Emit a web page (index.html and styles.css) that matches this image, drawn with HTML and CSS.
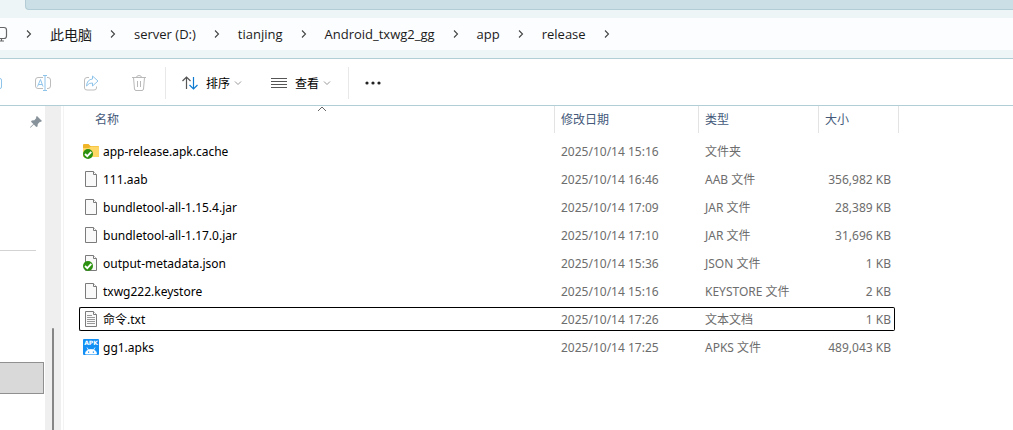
FILE: index.html
```html
<!DOCTYPE html>
<html lang="zh-CN">
<head>
    <meta charset="UTF-8">
    <meta name="viewport" content="width=device-width, initial-scale=1.0">
    <title>release</title>
    <link rel="stylesheet" href="styles.css">
</head>
<body>
    <!-- shared icons -->
    <svg class="sprite" aria-hidden="true">
        <symbol id="chevron" viewBox="0 0 8 8"><path d="M2 0.5 5.5 4 2 7.5" fill="none" stroke="#444" stroke-width="1.1"/></symbol>
        <symbol id="caret" viewBox="0 0 8 8"><path d="M1 2.5 4 5.5 7 2.5" fill="none" stroke="#999" stroke-width="1"/></symbol>
        <symbol id="file" viewBox="0 0 16 16">
            <path d="M2.5 0.5H10.5L13.5 3.5V15.5H2.5Z" fill="#f9f9f9" stroke="#7b7b7b"/>
            <path d="M10.5 0.5V3.5H13.5" fill="#fff" stroke="#7b7b7b"/>
        </symbol>
        <symbol id="synced" viewBox="0 0 16 16">
            <circle cx="5" cy="11" r="5" fill="#2c9110"/>
            <path d="M2 11 4.3 13.2 8.3 8.8" fill="none" stroke="#fff" stroke-width="1.8"/>
        </symbol>
    </svg>

    <div class="window">
        <div class="tab-strip"><div class="tab-space"></div></div>

        <nav class="address-bar" aria-label="路径">
            <svg class="pc-icon" viewBox="0 0 8 16"><path d="M0 1.5H4Q6.5 1.5 6.5 4V10Q6.5 12.5 4 12.5H0M1.5 12.5V15M0 15H4" fill="none" stroke="#666" stroke-width="1.2"/></svg>
            <svg class="chevron"><use href="#chevron"/></svg>
            <a class="root" href="#">此电脑</a>
            <svg class="chevron"><use href="#chevron"/></svg>
            <a href="#">server (D:)</a>
            <svg class="chevron"><use href="#chevron"/></svg>
            <a href="#">tianjing</a>
            <svg class="chevron"><use href="#chevron"/></svg>
            <a href="#">Android_txwg2_gg</a>
            <svg class="chevron"><use href="#chevron"/></svg>
            <a href="#">app</a>
            <svg class="chevron"><use href="#chevron"/></svg>
            <a href="#">release</a>
            <svg class="chevron"><use href="#chevron"/></svg>
        </nav>

        <div class="toolbar">
            <div class="actions">
                <button class="tool edge" aria-label="粘贴" disabled>
                    <svg width="2" height="18" viewBox="0 0 2 18"><path d="M0 4.5Q1.5 4.5 1.5 6V13Q1.5 14.5 0 14.5" fill="none" stroke="#8fc4ea"/></svg>
                </button>
                <button class="tool" aria-label="重命名" disabled>
                    <svg width="18" height="18" viewBox="0 0 18 18" fill="none">
                        <path d="M9 3.5H4Q1.5 3.5 1.5 6V12Q1.5 14.5 4 14.5H9M13 3.5H14Q16.5 3.5 16.5 6V12Q16.5 14.5 14 14.5H13" stroke="#bdbdbd"/>
                        <path d="M9 1.5H13M9 16.5H13M11 1.5V16.5M3.5 12.5 6.5 5.5 9 12.5M4.5 10.5H8" stroke="#8fc4ea"/>
                    </svg>
                </button>
                <button class="tool" aria-label="共享" disabled>
                    <svg width="18" height="18" viewBox="0 0 18 18" fill="none">
                        <path d="M7 3.5H5Q2.5 3.5 2.5 6V14Q2.5 16 5 16H12Q14.5 16 14.5 14V12.5" stroke="#bdbdbd"/>
                        <path d="M10.5 2 16 7 10.5 12V9Q7 8.5 4.5 12Q5 5.5 10.5 5Z" stroke="#8fc4ea" stroke-linejoin="round"/>
                    </svg>
                </button>
                <button class="tool" aria-label="删除" disabled>
                    <svg width="18" height="18" viewBox="0 0 18 18" fill="none" stroke="#b9b9b9">
                        <path d="M2 3.5H16M6.5 3.5Q6.5 1.5 9 1.5T11.5 3.5M3.5 3.5 4.5 15Q4.7 16.5 6 16.5H12Q13.3 16.5 13.5 15L14.5 3.5M7.5 7V13M10.5 7V13"/>
                    </svg>
                </button>
            </div>
            <div class="menus">
                <button class="menu">
                    <svg width="16" height="16" viewBox="0 0 16 16" fill="none" stroke-width="1.2">
                        <path d="M4.5 14V2M0.5 6 4.5 2 8.5 6" stroke="#555"/>
                        <path d="M11.5 2V14M7.5 10 11.5 14 15.5 10" stroke="#0f7bd0"/>
                    </svg>
                    排序
                    <svg class="caret"><use href="#caret"/></svg>
                </button>
                <button class="menu">
                    <svg width="16" height="16" viewBox="0 0 16 16"><path d="M0 3.5H16M0 6.5H16M0 9.5H16M0 12.5H16" stroke="#555"/></svg>
                    查看
                    <svg class="caret"><use href="#caret"/></svg>
                </button>
            </div>
            <button class="more" aria-label="更多">
                <svg width="18" height="4" viewBox="0 0 18 4" fill="#222"><circle cx="3" cy="2" r="1.6"/><circle cx="9" cy="2" r="1.6"/><circle cx="15" cy="2" r="1.6"/></svg>
            </button>
        </div>

        <div class="content">
            <aside class="sidebar">
                <svg class="pin" width="12" height="12" viewBox="0 0 12 12"><path d="M7 0 12 5 10.5 6 10 5.8 7.8 8 7.5 10.5 6.3 11 3.8 8.4 0.5 11.8 0 11.3 3.4 8 1 5.7 1.8 4.6 4.4 4.2 6.3 2 6 1Z" fill="#87929a"/></svg>
                <hr>
                <div class="nav-selected"></div>
            </aside>
            <div class="scrollbar"><div class="thumb"></div></div>

            <main class="files">
                <table>
                    <colgroup>
                        <col class="col-name">
                        <col class="col-date">
                        <col class="col-type">
                        <col class="col-size">
                    </colgroup>
                    <thead>
                        <tr>
                            <th class="name">
                                <span>名称</span>
                                <svg class="sort" width="10" height="6" viewBox="0 0 10 6"><path d="M1 5 5 1 9 5" fill="none" stroke="#666"/></svg>
                            </th>
                            <th><span>修改日期</span></th>
                            <th><span>类型</span></th>
                            <th class="last"><span>大小</span></th>
                        </tr>
                    </thead>
                    <tbody>
                        <tr>
                            <td class="name">
                                <div>
                                    <svg class="icon" viewBox="0 0 16 16">
                                        <path d="M0 2Q0 1 1 1H5.5L7.5 3H15Q16 3 16 4V13Q16 14 15 14H0Z" fill="#f0b429"/>
                                        <path d="M0 5H6L8 3.5H15Q16 3.5 16 4.5V13Q16 14 15 14H0Z" fill="#ffd766"/>
                                        <use href="#synced"/>
                                    </svg>
                                    app-release.apk.cache
                                </div>
                            </td>
                            <td>2025/10/14 15:16</td>
                            <td>文件夹</td>
                            <td class="size"></td>
                        </tr>
                        <tr>
                            <td class="name"><div><svg class="icon"><use href="#file"/></svg>111.aab</div></td>
                            <td>2025/10/14 16:46</td>
                            <td>AAB 文件</td>
                            <td class="size">356,982 KB</td>
                        </tr>
                        <tr>
                            <td class="name"><div><svg class="icon"><use href="#file"/></svg>bundletool-all-1.15.4.jar</div></td>
                            <td>2025/10/14 17:09</td>
                            <td>JAR 文件</td>
                            <td class="size">28,389 KB</td>
                        </tr>
                        <tr>
                            <td class="name"><div><svg class="icon"><use href="#file"/></svg>bundletool-all-1.17.0.jar</div></td>
                            <td>2025/10/14 17:10</td>
                            <td>JAR 文件</td>
                            <td class="size">31,696 KB</td>
                        </tr>
                        <tr>
                            <td class="name"><div><svg class="icon"><use href="#file"/><use href="#synced"/></svg>output-metadata.json</div></td>
                            <td>2025/10/14 15:36</td>
                            <td>JSON 文件</td>
                            <td class="size">1 KB</td>
                        </tr>
                        <tr>
                            <td class="name"><div><svg class="icon"><use href="#file"/></svg>txwg222.keystore</div></td>
                            <td>2025/10/14 15:16</td>
                            <td>KEYSTORE 文件</td>
                            <td class="size">2 KB</td>
                        </tr>
                        <tr class="focused">
                            <td class="name">
                                <div>
                                    <svg class="icon" viewBox="0 0 16 16">
                                        <use href="#file"/>
                                        <path d="M4 4.5H9M4 6.5H12M4 8.5H12M4 10.5H12M4 12.5H12" stroke="#999"/>
                                    </svg>
                                    命令.txt
                                </div>
                            </td>
                            <td>2025/10/14 17:26</td>
                            <td>文本文档</td>
                            <td class="size">1 KB</td>
                        </tr>
                        <tr>
                            <td class="name">
                                <div>
                                    <svg class="icon" viewBox="0 0 16 16">
                                        <rect width="16" height="16" rx="1" fill="#1490f5"/>
                                        <text class="apk" x="8" y="6" text-anchor="middle">APK</text>
                                        <path d="M2.5 15Q2.5 10.5 8 10.5T13.5 15ZM4 8.5 5.5 11M12 8.5 10.5 11" fill="#fff" stroke="#fff" stroke-width="0.8"/>
                                        <path d="M5 12.5H6.2V13.7H5ZM9.8 12.5H11V13.7H9.8Z" fill="#1490f5"/>
                                    </svg>
                                    gg1.apks
                                </div>
                            </td>
                            <td>2025/10/14 17:25</td>
                            <td>APKS 文件</td>
                            <td class="size">489,043 KB</td>
                        </tr>
                    </tbody>
                </table>
            </main>
        </div>
    </div>
</body>
</html>
```
FILE: styles.css
```css
* {
    box-sizing: border-box;
}

body {
    margin: 0;
    font-family: "Noto Sans", "Noto Sans CJK SC", sans-serif;
    font-size: 12px;
    color: #000;
    background-color: #fff;
}

button {
    padding: 0;
    border: none;
    background: none;
    font: inherit;
    color: inherit;
}

svg {
    display: block;
    flex: none;
}

.sprite {
    position: absolute;
    width: 0;
    height: 0;
}

.window {
    display: flex;
    flex-direction: column;
    min-height: 100vh;
}

/* tab strip and path */
.tab-strip {
    height: 18px;
    padding-left: 25px;
    background-color: #edf5f7;
}

.tab-space {
    height: 10px;
    background-color: #cbdfe6;
    border-bottom: 1px solid #b3cdd6;
    border-left: 1px solid #b3cdd6;
    border-bottom-left-radius: 4px;
}

.address-bar {
    display: flex;
    align-items: center;
    gap: 17px;
    height: 41px;
    padding-bottom: 9px;
    background-color: #fbfdfe;
    border-bottom: 1px solid #b3cdd6;
    box-shadow: inset 0 -8px #edf5f7;
    font-family: "Open Sans", "Noto Sans CJK SC", sans-serif;
    font-size: 13px;
}

.address-bar a {
    color: #1b1b1b;
    text-decoration: none;
    white-space: nowrap;
}

.address-bar .root {
    font-size: 14px;
}

.pc-icon {
    width: 8px;
    height: 16px;
}

.chevron,
.caret {
    width: 8px;
    height: 8px;
}

/* toolbar */
.toolbar {
    display: flex;
    align-items: center;
    height: 47px;
    padding-top: 2px;
    border-bottom: 1px solid #b3cdd6;
}

.actions,
.menus {
    display: flex;
    align-items: center;
    height: 32px;
    border-right: 1px solid #e8e8e8;
}

.actions {
    gap: 30px;
    padding-right: 17px;
}

.edge {
    width: 4px;
}

.menus {
    gap: 29px;
    padding: 0 17px 0 16px;
}

.menu {
    display: flex;
    align-items: center;
    gap: 8px;
}

.menu .caret {
    margin-left: -4px;
}

.more {
    margin-left: 15px;
}

/* panes */
.content {
    display: flex;
    flex: 1;
}

.sidebar {
    width: 45px;
}

.pin {
    margin: 10px 0 0 30px;
}

.sidebar hr {
    margin: 122px 9px 111px 0;
    border: none;
    border-top: 1px solid #d3d3d3;
}

.nav-selected {
    height: 32px;
    margin-right: 1px;
    background-color: #d9d9d9;
    border: 1px solid #909090;
    border-left: none;
}

.scrollbar {
    display: flex;
    width: 16px;
    padding: 222px 0 0 7px;
    background-color: #efefef;
}

.thumb {
    width: 2px;
    background-color: #868686;
    border-radius: 1px 1px 0 0;
}

.files {
    flex: 1;
    margin-left: 2px;
    padding-left: 15px;
    border-left: 1px solid #f3f3f3;
}

/* file list */
table {
    width: 816px;
    margin-top: -4px;
    table-layout: fixed;
    border-collapse: separate;
    border-spacing: 0 4px;
}

.col-date {
    width: 144px;
}

.col-type {
    width: 120px;
}

.col-size {
    width: 76px;
}

th {
    position: relative;
    height: 29px;
    padding: 0;
    vertical-align: top;
    text-align: left;
    font-weight: normal;
    color: #44597a;
}

th span {
    display: block;
    height: 27px;
    padding-left: 6px;
    border-right: 1px solid #e3e3e3;
    line-height: 27px;
}

th.name span {
    padding-left: 16px;
}

th.last span {
    margin-right: -4px;
}

.sort {
    position: absolute;
    top: 0;
    left: 50%;
}

td {
    height: 24px;
    padding: 2px 3px 0 6px;
    border: solid transparent;
    border-width: 1px 0;
    line-height: 20px;
    white-space: nowrap;
    color: #6d6d6d;
}

td.name {
    padding-left: 3px;
    border-left-width: 1px;
    color: #000;
}

td.size {
    border-right-width: 1px;
    text-align: right;
}

td.name div {
    display: flex;
    align-items: center;
    gap: 4px;
}

.focused td {
    border-color: #000;
}

.focused td:first-child {
    border-radius: 2px 0 0 2px;
}

.focused td:last-child {
    border-radius: 0 2px 2px 0;
}

.icon {
    width: 16px;
    height: 16px;
    margin-bottom: 2px;
}

.apk {
    font: bold 6px "DejaVu Sans", sans-serif;
    fill: #fff;
}
```
